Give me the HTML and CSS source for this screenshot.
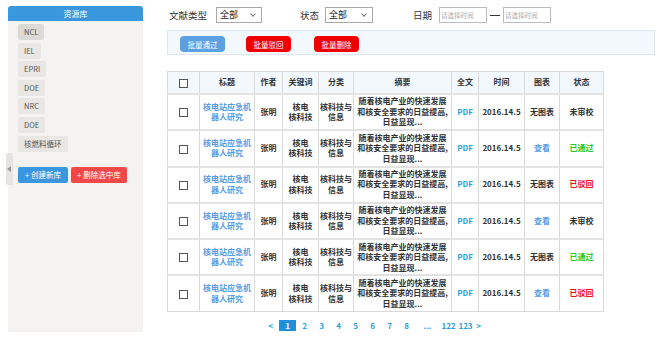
FILE: index.html
```html
<!DOCTYPE html>
<html lang="zh-CN">
<head>
    <meta charset="UTF-8">
    <meta name="viewport" content="width=device-width, initial-scale=1.0">
    <title>资源库</title>
    <link rel="stylesheet" href="styles.css">
</head>
<body>
    <div class="page">
        <div class="sidebar">
            <div class="side-title">资源库</div>
            <div class="lib-list">
                <span class="lib active">NCL</span>
                <span class="lib">IEL</span>
                <span class="lib">EPRI</span>
                <span class="lib">DOE</span>
                <span class="lib">NRC</span>
                <span class="lib">DOE</span>
                <span class="lib">核燃料循环</span>
            </div>
            <div class="side-btns">
                <button class="btn blue">+ 创建新库</button>
                <button class="btn red">+ 删除选中库</button>
            </div>
            <div class="side-toggle"><span class="arrow"></span></div>
        </div>

        <div class="content">
            <div class="filters">
                <span class="flabel">文献类型</span>
                <span class="select type-select">全部<span class="caret"></span></span>
                <span class="flabel status-label">状态</span>
                <span class="select status-select">全部<span class="caret"></span></span>
                <span class="flabel date-label">日期</span>
                <span class="date-input date-from">请选择时间</span>
                <span class="dash"></span>
                <span class="date-input">请选择时间</span>
            </div>

            <div class="toolbar">
                <button class="tbtn pass">批量通过</button>
                <button class="tbtn reject">批量驳回</button>
                <button class="tbtn reject">批量删除</button>
            </div>

            <table class="list">
                <colgroup>
                    <col style="width:32px"><col style="width:55px"><col style="width:28px">
                    <col style="width:36px"><col style="width:35px"><col style="width:98px">
                    <col style="width:27px"><col style="width:46px"><col style="width:35px">
                    <col style="width:44px">
                </colgroup>
                <thead>
                    <tr>
                        <th><span class="check"></span></th>
                        <th>标题</th><th>作者</th><th>关键词</th><th>分类</th><th>摘要</th>
                        <th>全文</th><th>时间</th><th>图表</th><th>状态</th>
                    </tr>
                </thead>
                <tbody id="rows"></tbody>
            </table>

            <div class="pager">
                <span class="pg">&lt;</span>
                <span class="pg cur">1</span>
                <span class="pg">2</span>
                <span class="pg">3</span>
                <span class="pg">4</span>
                <span class="pg">5</span>
                <span class="pg">6</span>
                <span class="pg">7</span>
                <span class="pg">8</span>
                <span class="pg dots">...</span>
                <span class="pg">122</span>
                <span class="pg">123</span>
                <span class="pg next">&gt;</span>
            </div>
        </div>
    </div>

    <script>
        const rows = [
            { chart: '无图表', status: '未审校', cls: '' },
            { chart: '查看', status: '已通过', cls: 'ok' },
            { chart: '无图表', status: '已驳回', cls: 'no' },
            { chart: '查看', status: '未审校', cls: '' },
            { chart: '无图表', status: '已通过', cls: 'ok' },
            { chart: '查看', status: '已驳回', cls: 'no' }
        ];

        const tbody = document.getElementById('rows');
        rows.forEach(r => {
            const tr = document.createElement('tr');
            const chart = r.chart === '查看' ? '<span class="link">查看</span>' : r.chart;
            tr.innerHTML =
                '<td><span class="check"></span></td>' +
                '<td class="link">核电站应急机<br>器人研究</td>' +
                '<td>张明</td>' +
                '<td>核电<br>核科技</td>' +
                '<td>核科技与<br>信息</td>' +
                '<td class="abs">随着核电产业的快速发展<br>和核安全要求的日益提高,<br>日益显现...</td>' +
                '<td class="pdf">PDF</td>' +
                '<td>2016.14.5</td>' +
                '<td>' + chart + '</td>' +
                '<td class="st ' + r.cls + '">' + r.status + '</td>';
            tbody.appendChild(tr);
        });
    </script>
</body>
</html>
```

FILE: styles.css
```css
body {
    margin: 0;
    width: 665px;
    height: 348px;
    overflow: hidden;
    background: #fff;
    font-family: "Noto Sans CJK SC", "Liberation Sans", sans-serif;
    color: #333;
}

.page {
    display: flex;
    padding: 6px 0 0 8px;
}

/* left panel */
.sidebar {
    position: relative;
    width: 135px;
    height: 326px;
    background: #f5f3f2;
    border-radius: 3px 3px 0 0;
}

.side-title {
    height: 15px;
    line-height: 15px;
    background: #3a96dd;
    color: #fff;
    font-size: 8px;
    text-align: center;
    border-radius: 3px 3px 0 0;
}

.lib-list {
    display: flex;
    flex-direction: column;
    align-items: flex-start;
    gap: 2.6px;
    padding: 3px 0 0 10px;
}

.lib {
    height: 16px;
    line-height: 16px;
    padding: 0 6px;
    font-size: 7.5px;
    color: #555;
    background: #e9e7e4;
    border-radius: 2px;
}

.lib.active {
    background: #dcdad6;
}

.side-btns {
    display: flex;
    gap: 3px;
    padding: 15px 0 0 10px;
}

.btn {
    height: 16px;
    border: none;
    border-radius: 2px;
    color: #fff;
    font-family: inherit;
    font-size: 7.5px;
    padding: 0;
}

.btn.blue {
    width: 50px;
    background: #3a96dd;
}

.btn.red {
    width: 56px;
    background: #f04848;
}

.side-toggle {
    position: absolute;
    left: -2px;
    top: 147px;
    width: 7px;
    height: 32px;
    background: #e6e4e2;
    border-radius: 2px 0 0 2px;
}

.arrow {
    position: absolute;
    left: 1px;
    top: 13px;
    border-right: 4px solid #999;
    border-top: 3px solid transparent;
    border-bottom: 3px solid transparent;
}

/* right side */
.content {
    margin-left: 24px;
    width: 488px;
}

.filters {
    display: flex;
    align-items: center;
    height: 16px;
    margin-top: 1px;
    font-size: 9.5px;
    color: #333;
}

.flabel {
    margin-left: 2px;
}

.status-label {
    margin-left: 38px;
}

.date-label {
    margin-left: 40px;
}

.select {
    position: relative;
    box-sizing: border-box;
    width: 46px;
    height: 16px;
    line-height: 14px;
    padding-left: 3px;
    border: 1px solid #aaa;
    font-size: 9px;
    color: #222;
}

.type-select {
    margin-left: 9px;
}

.status-select {
    width: 48px;
    margin-left: 6px;
}

.caret {
    position: absolute;
    right: 6px;
    top: 4px;
    width: 3px;
    height: 3px;
    border-right: 1px solid #777;
    border-bottom: 1px solid #777;
    transform: rotate(45deg);
}

.date-input {
    box-sizing: border-box;
    width: 48px;
    height: 16px;
    line-height: 14px;
    padding-left: 1px;
    border: 1px solid #bbb;
    font-size: 6.5px;
    color: #aaa;
}

.date-from {
    margin-left: 7px;
}

.dash {
    width: 10px;
    height: 1px;
    margin: 0 3px;
    background: #333;
}

.toolbar {
    display: flex;
    gap: 21px;
    box-sizing: border-box;
    height: 25px;
    margin-top: 7px;
    padding: 5px 0 0 12px;
    background: #f3f8fd;
    border: 1px solid #dfe6ed;
}

.tbtn {
    width: 45px;
    height: 16px;
    padding: 0;
    border: none;
    border-radius: 4px;
    color: #fff;
    font-family: inherit;
    font-size: 7.5px;
}

.tbtn.pass {
    background: #5c9fe2;
}

.tbtn.reject {
    background: #ee0000;
}

.tbtn.reject + .tbtn.reject {
    margin-left: 2px;
}

/* table */
.list {
    width: 436px;
    margin-top: 16px;
    border-collapse: collapse;
    table-layout: fixed;
    font-size: 8px;
    font-weight: bold;
    color: #333;
}

.list th,
.list td {
    border: 1px solid #d9d9d9;
    padding: 0;
    text-align: center;
    line-height: 10.5px;
}

.list th {
    height: 21px;
    background: #f3f8fd;
    font-weight: bold;
}

.list td {
    height: 34.3px;
}

.list tbody tr {
    border-top: 2px solid #e2e2e2;
}

.check {
    display: inline-block;
    width: 7px;
    height: 7px;
    border: 1px solid #555;
    background: #fff;
    vertical-align: middle;
}

.link {
    color: #5a9be6;
}

.abs {
    white-space: nowrap;
    overflow: visible;
}

.pdf {
    color: #2aa3e2;
}

.st.ok {
    color: #22cc22;
}

.st.no {
    color: #ee1111;
}

/* pagination */
.pager {
    display: flex;
    align-items: center;
    margin-top: 8px;
    padding-left: 95px;
    font-size: 8px;
    font-weight: bold;
    color: #2a9fd9;
}

.pg {
    width: 17px;
    height: 11px;
    line-height: 11px;
    text-align: center;
}

.pg.dots {
    width: 25px;
}

.pg.next {
    width: 9px;
}

.pg.cur {
    background: #1e8fd8;
    color: #fff;
}
```
